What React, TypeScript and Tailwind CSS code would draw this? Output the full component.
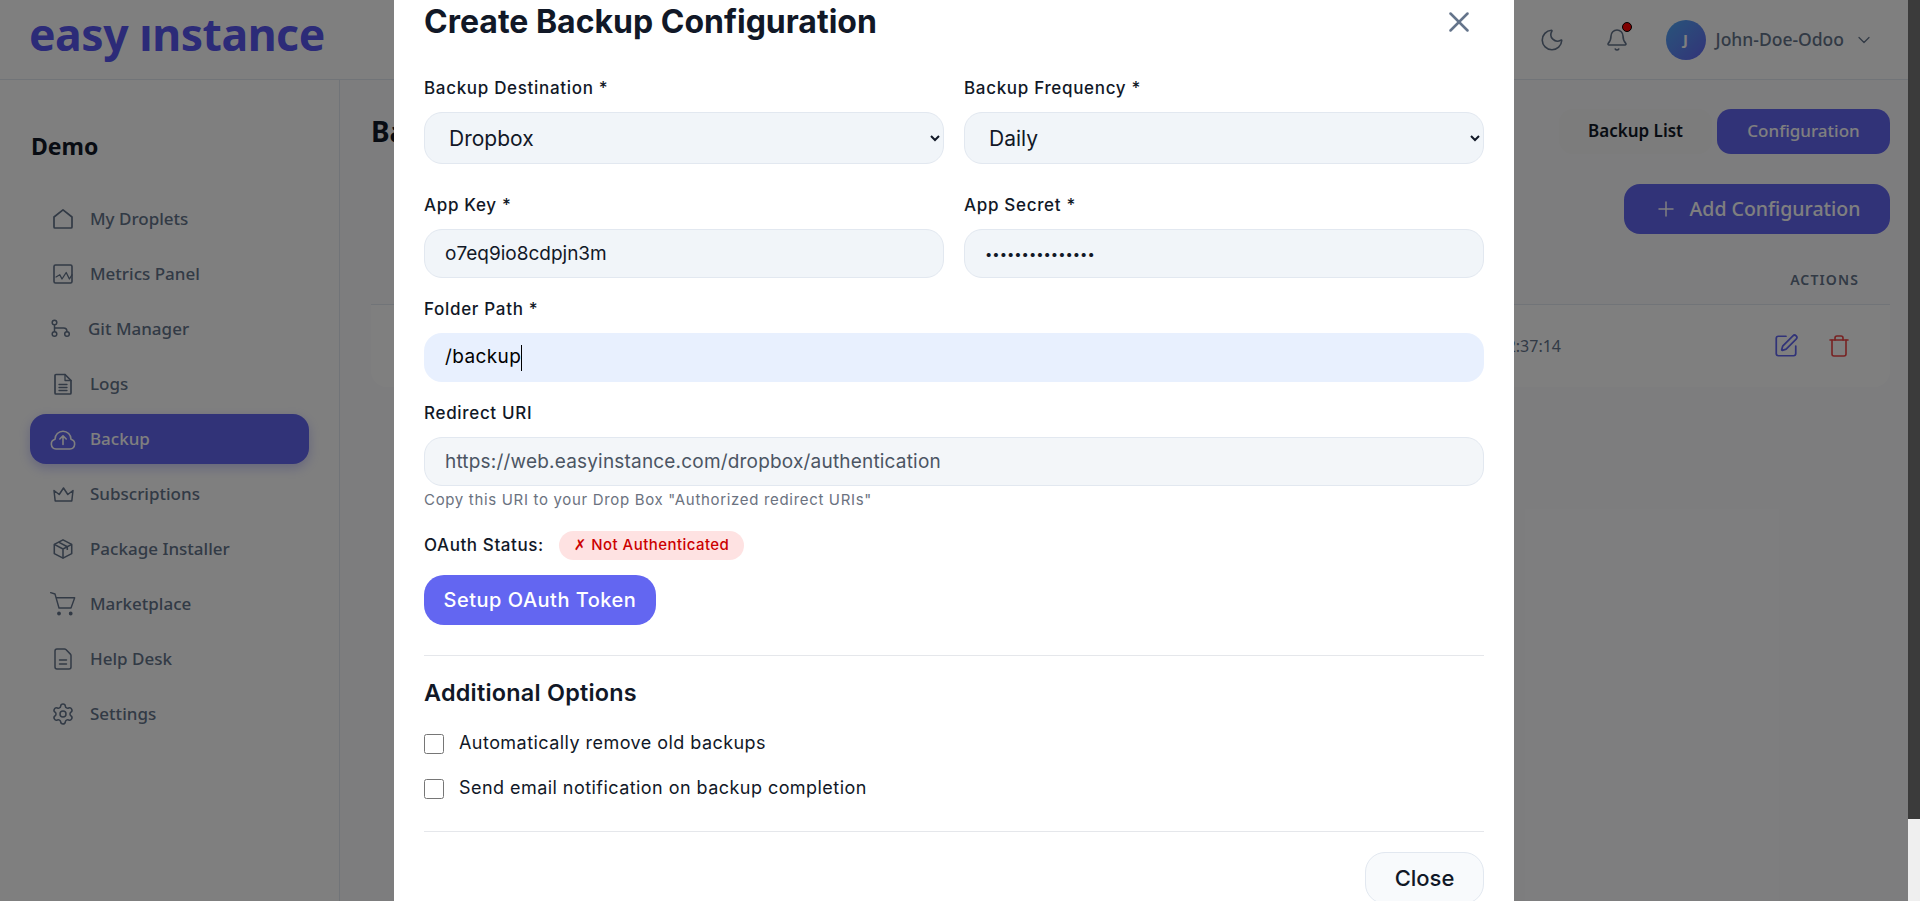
import { Bell, ChevronDown, Moon, Plus, Settings, SquarePen, Trash, X } from "lucide-react";
import type { ReactNode } from "react";

const ic = "shrink-0";

function HomeIcon() {
  return (
    <svg className={ic} width="24" height="24" viewBox="0 0 24 24" fill="none" stroke="currentColor" strokeWidth="1.7" strokeLinejoin="round">
      <path d="M3 10 12 2.8l9 7.2v10a1 1 0 0 1-1 1H4a1 1 0 0 1-1-1z" />
    </svg>
  );
}

function MetricsIcon() {
  return (
    <svg className={ic} width="24" height="24" viewBox="0 0 24 24" fill="none" stroke="currentColor" strokeWidth="1.6" strokeLinejoin="round" strokeLinecap="round">
      <rect x="3" y="3" width="18" height="18" rx="1.5" />
      <path d="m5 15 3.8-2.2L11 17l4.2-6.5 3.2 6.5 2.6-4.2" strokeWidth="1.3" />
    </svg>
  );
}

function GitIcon() {
  return (
    <svg className={ic} width="20" height="20" viewBox="0 0 20 20" fill="none" stroke="currentColor" strokeWidth="1.5">
      <circle cx="3.5" cy="3.5" r="2.3" />
      <circle cx="3.5" cy="15" r="2.3" />
      <circle cx="16" cy="15" r="2.3" />
      <path d="M3.5 5.8v6.9M3.5 9h9c1.8 0 3.5 1 3.5 3.7" />
    </svg>
  );
}

function LogsIcon() {
  return (
    <svg className={ic} width="24" height="24" viewBox="0 0 24 24" fill="none" stroke="currentColor" strokeWidth="1.7" strokeLinejoin="round" strokeLinecap="round">
      <path d="M4 3.5a1 1 0 0 1 1-1h9l6 6v12.5a1 1 0 0 1-1 1H5a1 1 0 0 1-1-1z" />
      <path d="M14 2.5V8.5h6" strokeWidth="1.3" />
      <path d="M8 12.5h8M8 15.5h8M8 18.5h8" strokeWidth="1.3" />
    </svg>
  );
}

function CloudIcon() {
  return (
    <svg className={ic} width="26" height="21" viewBox="0 0 26 21" fill="none" stroke="currentColor" strokeWidth="1.6" strokeLinecap="round" strokeLinejoin="round">
      <path d="M6 20a5 5 0 0 1-1-9.8 8 8 0 0 1 16 0 5 5 0 0 1-1 9.8z" />
      <path d="M13 15.5V7M9.8 10 13 6.8l3.2 3.2" />
    </svg>
  );
}

function CrownIcon() {
  return (
    <svg className={ic} width="21" height="15" viewBox="0 0 21 15" fill="none" stroke="currentColor" strokeWidth="1.5" strokeLinejoin="round">
      <path d="M1 3.5 6.2 7.5 10.5 1l4.3 6.5L20 3.5 18.8 14H2.2z" />
    </svg>
  );
}

function BoxIcon() {
  return (
    <svg className={ic} width="22" height="22" viewBox="0 0 24 24" fill="none" stroke="currentColor" strokeWidth="1.7" strokeLinejoin="round">
      <path d="m12 2 9.5 5v10L12 22l-9.5-5V7z" />
      <path d="m2.5 7 9.5 5 9.5-5M12 12v10M7.2 4.5l9.5 5v3.5" />
    </svg>
  );
}

function CartIcon() {
  return (
    <svg className={ic} width="26" height="24" viewBox="0 0 26 24" fill="none" stroke="currentColor" strokeWidth="1.4" strokeLinejoin="round" strokeLinecap="round">
      <path d="M.7.7 5 2l4 14h12l3.7-10.2L6 5.5" />
      <circle cx="9" cy="21.5" r="1.2" fill="currentColor" />
      <circle cx="20.7" cy="21.5" r="1.2" fill="currentColor" />
    </svg>
  );
}

function HelpIcon() {
  return (
    <svg className={ic} width="24" height="24" viewBox="0 0 24 24" fill="none" stroke="currentColor" strokeWidth="1.5" strokeLinejoin="round" strokeLinecap="round">
      <path d="M4 4a2 2 0 0 1 2-2h7.5a2 2 0 0 1 1.4.6l4.5 4.5a2 2 0 0 1 .6 1.4V20a2 2 0 0 1-2 2H6a2 2 0 0 1-2-2z" />
      <path d="M8.5 13h7M8.5 17h7" />
    </svg>
  );
}

type NavItem = { label: string; icon: ReactNode; active?: boolean; narrow?: boolean };

const navItems: NavItem[] = [
  { label: "My Droplets", icon: <HomeIcon /> },
  { label: "Metrics Panel", icon: <MetricsIcon /> },
  { label: "Git Manager", icon: <GitIcon />, narrow: true },
  { label: "Logs", icon: <LogsIcon /> },
  { label: "Backup", icon: <CloudIcon />, active: true },
  { label: "Subscriptions", icon: <CrownIcon /> },
  { label: "Package Installer", icon: <BoxIcon /> },
  { label: "Marketplace", icon: <CartIcon /> },
  { label: "Help Desk", icon: <HelpIcon /> },
  { label: "Settings", icon: <Settings className={ic} size={24} strokeWidth={1.5} /> },
];

function Sidebar() {
  return (
    <aside className="flex w-[340px] shrink-0 flex-col border-r border-[#e2e8f0] bg-white pl-[30px] pr-[30px] pt-[48px]">
      <h2 className="pl-px text-[23px] font-bold leading-[36px] text-[#111827]">Demo</h2>
      <nav className="mt-[30px] flex flex-col gap-[5px]">
        {navItems.map((item) => (
          <a
            key={item.label}
            className={
              item.active
                ? "flex h-[50px] items-center gap-[14px] rounded-[16px] bg-[#6366f1] pl-[20px] text-white shadow-[0_4px_12px_rgba(99,102,241,0.35)]"
                : "flex h-[50px] items-center gap-[14px] rounded-[16px] pl-[20px] text-[#64748b]"
            }
          >
            <span className={item.narrow ? "flex w-[24px] shrink-0 justify-center pr-[2px]" : "flex w-[26px] shrink-0 justify-center"}>{item.icon}</span>
            <span className="text-[17px] font-medium">{item.label}</span>
          </a>
        ))}
      </nav>
    </aside>
  );
}

function PageBehind() {
  return (
    <div className="flex h-full flex-col font-['Noto_Sans',sans-serif]">
      <header className="flex h-[80px] shrink-0 items-center justify-between border-b border-[#e2e8f0] bg-white pb-[10px] pl-[29px] pr-[34px]">
        <span className="text-[44.5px] font-bold leading-none tracking-[-0.01em] text-[#5856f0]">easy ınstance</span>
        <div className="flex items-center pt-[10px] text-[#64748b]">
          <Moon size={26} strokeWidth={1.5} />
          <span className="relative ml-[40px] flex">
            <Bell size={24} strokeWidth={1.6} />
            <span className="absolute -right-[3px] -top-[6px] h-[10px] w-[10px] rounded-full border border-black bg-[#ff0000]" />
          </span>
          <span className="ml-[37px] flex h-[40px] w-[40px] items-center justify-center rounded-full bg-gradient-to-br from-[#4fa8f5] to-[#6366f1] text-[15px] font-bold text-white">
            J
          </span>
          <span className="ml-[10px] text-[17.5px] font-medium">John-Doe-Odoo</span>
          <ChevronDown className="ml-[10px]" size={20} strokeWidth={1.5} />
        </div>
      </header>
      <div className="flex min-h-0 flex-1">
        <Sidebar />
        <main className="flex-1 bg-[#fbfbfd] pl-[31px] pr-[18px] pt-[29px]">
          <div className="flex items-start justify-between">
            <h1 className="text-[28px] font-bold leading-[44px] text-[#111827]">Backup</h1>
            <div className="flex gap-[5px]">
              <button className="h-[45px] w-[153px] rounded-[14px] bg-[#f8f8f8] pb-[2px] text-[17px] font-semibold text-[#111827]">Backup List</button>
              <button className="h-[45px] w-[173px] rounded-[14px] bg-[#6366f1] pb-[2px] text-[17px] font-medium text-white">Configuration</button>
            </div>
          </div>
          <div className="mt-[30px] flex justify-end">
            <button className="flex h-[50px] w-[266px] items-center justify-center gap-[12px] rounded-[16px] bg-[#6366f1] text-[19.5px] font-medium text-white">
              <Plus size={24} strokeWidth={1.5} />
              Add Configuration
            </button>
          </div>
          <div className="flex h-[70px] items-center justify-end pr-[31px] pt-[20px] text-[14px] font-semibold tracking-[0.08em] text-[#64748b]">ACTIONS</div>
          <div className="flex h-[83px] items-center justify-end rounded-b-[16px] border-t border-[#e2e8f0] bg-white pr-[39px]">
            <span className="mr-[212px] text-[16px] text-[#64748b]">12:37:14</span>
            <SquarePen className="text-[#6366f1]" size={26} strokeWidth={1.6} />
            <Trash className="ml-[28px] text-[#ef4444]" size={24} strokeWidth={1.6} />
          </div>
        </main>
      </div>
    </div>
  );
}

const labelCls = "block text-[17px] font-medium leading-[24px] tracking-[0.04em] text-[#111827]";
const inputBase = "mt-[12px] h-[49px] w-full rounded-[18px] border border-[#e2e8f0] px-[20px] outline-none";

function Field({ label, value, type = "text" }: { label: string; value: string; type?: string }) {
  const size = type === "password" ? "text-[13px]" : "text-[19px]";
  return (
    <div>
      <label className={labelCls}>{label}</label>
      <input className={`${inputBase} bg-[#f1f5f9] text-[#111827] ${size}`} type={type} defaultValue={value} readOnly />
    </div>
  );
}

function SelectField({ label, value }: { label: string; value: string }) {
  return (
    <div>
      <label className={labelCls}>{label}</label>
      <select className="mt-[12px] h-[52px] w-full rounded-[18px] border border-[#e2e8f0] bg-[#f1f5f9] px-[20px] text-[21px] text-[#111827] outline-none" defaultValue={value}>
        <option>{value}</option>
      </select>
    </div>
  );
}

function CheckRow({ label, className }: { label: string; className: string }) {
  return (
    <label className={`flex h-[24px] items-center gap-[15px] text-[18px] tracking-[0.025em] text-[#111827] ${className}`}>
      <input type="checkbox" className="h-[20px] w-[20px]" readOnly />
      <span className="pb-[4px]">{label}</span>
    </label>
  );
}

function Modal() {
  return (
    <div className="w-[1120px] overflow-hidden bg-white px-[30px] font-['Inter',sans-serif]">
      <div className="flex h-[44px] items-center justify-between">
        <h3 className="text-[32px] font-bold text-[#111827]">Create Backup Configuration</h3>
        <X className="mr-[8px] text-[#64748b]" size={34} strokeWidth={1.8} />
      </div>
      <div className="mt-[32px] grid grid-cols-2 gap-x-[20px]">
        <SelectField label="Backup Destination *" value="Dropbox" />
        <SelectField label="Backup Frequency *" value="Daily" />
      </div>
      <div className="mt-[29px] grid grid-cols-2 gap-x-[20px]">
        <Field label="App Key *" value="o7eq9io8cdpjn3m" />
        <Field label="App Secret *" value="secretsecretsec" type="password" />
      </div>
      <div className="mt-[19px]">
        <label className={labelCls}>Folder Path *</label>
        <div className="mt-[12px] flex h-[49px] items-center rounded-[18px] bg-[#e8f0fe] px-[21px] text-[19px] tracking-[0.02em] text-black">
          /backup<span className="h-[26px] w-px bg-black" />
        </div>
      </div>
      <div className="mt-[19px]">
        <label className={labelCls}>Redirect URI</label>
        <input className={`${inputBase} bg-[#f3f6f9] text-[19px] tracking-[0.01em] text-[#4b5563]`} defaultValue="https://web.easyinstance.com/dropbox/authentication" readOnly />
        <p className="mt-[4px] text-[15px] leading-[20px] tracking-[0.045em] text-[#6b7280]">Copy this URI to your Drop Box "Authorized redirect URIs"</p>
      </div>
      <div className="mt-[21px] flex items-center">
        <span className="text-[17px] font-medium tracking-[0.035em] text-[#111827]">OAuth Status:</span>
        <span className="ml-[15px] flex h-[29px] items-center rounded-full bg-[#fee2e2] px-[15px] text-[15px] font-medium tracking-[0.03em] text-[#cc0000]">
          <span className="font-['DejaVu_Sans',sans-serif]">✗</span>&nbsp;Not Authenticated
        </span>
      </div>
      <button className="mt-[15px] block h-[50px] w-[232px] rounded-[20px] bg-[#6366f1] text-[20px] font-medium tracking-[0.025em] text-white">Setup OAuth Token</button>
      <div className="mt-[30px] border-t border-[#e5e7eb] pt-[22px]">
        <h4 className="text-[23.4px] font-semibold leading-[30px] tracking-[0.01em] text-[#111827]">Additional Options</h4>
        <CheckRow className="mt-[24px]" label="Automatically remove old backups" />
        <CheckRow className="mt-[21px]" label="Send email notification on backup completion" />
      </div>
      <div className="mt-[30px] flex justify-end border-t border-[#e5e7eb] pt-[20px]">
        <button className="h-[52px] w-[119px] rounded-[20px] border border-[#e2e8f0] bg-[#f8fafc] text-[22px] font-medium text-[#111827]">Close</button>
      </div>
    </div>
  );
}

export default function App() {
  return (
    <div className="flex h-[901px] w-full overflow-hidden">
      <div className="relative min-w-0 flex-1">
        <PageBehind />
        <div className="absolute inset-0 flex justify-center overflow-hidden bg-black/50">
          <Modal />
        </div>
      </div>
      <div className="flex w-[12px] shrink-0 flex-col bg-[#efefef]">
        <div className="h-[819px] bg-[#3b3b3b]" />
      </div>
    </div>
  );
}
